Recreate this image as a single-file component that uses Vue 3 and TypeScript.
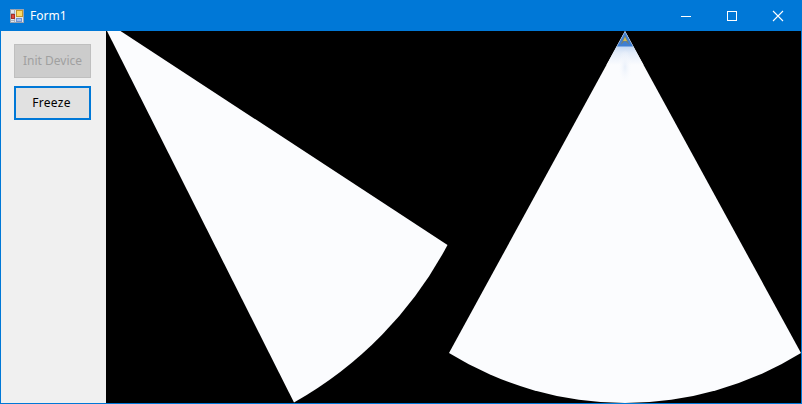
<script setup lang="ts">
const rightWedge = 'M625 0 L449 322 A335 335 0 0 0 801 322 Z'
const leftWedge = 'M107 0 L294 371.5 A390 390 0 0 0 447.5 214 L120.5 0 Z'
</script>

<template>
  <div class="window">
    <header class="titlebar">
      <svg class="app-icon" width="16" height="16" viewBox="0 0 16 16">
        <rect x="1.500" y="1.500" width="13" height="13" fill="#dfe5ee" stroke="#98a2b0" />
        <path d="M1.500 5.500H6M5.500 1.500V14.500M1.500 12.500H6" stroke="#a9b2bf" />
        <rect x="7.500" y="2.500" width="6" height="6" fill="#fbd968" stroke="#c1962a" />
        <rect x="2.500" y="6.500" width="3" height="4" fill="#e2473c" stroke="#a5302a" />
        <rect x="7.500" y="10.500" width="5" height="3" fill="#a4c0f0" stroke="#7393d0" />
      </svg>
      <span class="title">Form1</span>
      <div class="controls">
        <svg width="46" height="30" viewBox="0 0 46 30"><path d="M18 15.5H28" stroke="#fff" /></svg>
        <svg width="46" height="30" viewBox="0 0 46 30"><rect x="18.5" y="10.5" width="9" height="9" fill="none" stroke="#fff" /></svg>
        <svg width="46" height="30" viewBox="0 0 46 30"><path d="M18 10L28 20M28 10L18 20" stroke="#fff" stroke-width="1.1" /></svg>
      </div>
    </header>
    <div class="body">
      <aside class="sidebar">
        <button class="btn disabled" disabled>Init Device</button>
        <button class="btn focused">Freeze</button>
      </aside>
      <main class="canvas">
        <svg class="scene" viewBox="106 0 695 372" preserveAspectRatio="none">
          <defs>
            <linearGradient id="glow" gradientUnits="userSpaceOnUse" x1="0" y1="12" x2="0" y2="34">
              <stop offset="0" stop-color="#b6cfef" />
              <stop offset="0.45" stop-color="#e3ecf9" />
              <stop offset="1" stop-color="#fbfcfe" />
            </linearGradient>
            <radialGradient id="streak">
              <stop offset="0" stop-color="#e9f0fa" />
              <stop offset="1" stop-color="#fbfcfe" stop-opacity="0" />
            </radialGradient>
          </defs>
          <path :d="leftWedge" fill="#fbfcfe" />
          <path :d="rightWedge" fill="#fbfcfe" />
          <path d="M625 0 L606.5 34 H643.500 Z" fill="url(#glow)" />
          <ellipse cx="625" cy="36" rx="7" ry="17" fill="url(#streak)" />
          <path d="M625 1 L617 15.500 H633 Z" fill="#3f7fd2" />
          <path d="M625 4 L620.500 14 L625 10 L629.500 14 Z" fill="#6f7f78" />
          <path d="M625 6 L623 10 H627 Z" fill="#d4b94e" />
        </svg>
      </main>
    </div>
  </div>
</template>

<style scoped>
.window {
  width: 802px;
  height: 404px;
  box-sizing: border-box;
  border: 1px solid #0078d7;
  border-top: 0;
  display: flex;
  flex-direction: column;
  overflow: hidden;
}
.titlebar {
  height: 31px;
  flex: none;
  margin: 0 -1px;
  background: #0078d7;
  color: #fff;
  display: flex;
  align-items: center;
  padding-left: 9px;
  font: 12px "Noto Sans", sans-serif;
}
.app-icon {
  flex: none;
  margin-right: 5px;
}
.controls {
  margin-left: auto;
  display: flex;
  margin-right: 1px;
}
.controls svg {
  display: block;
}
.body {
  flex: 1;
  display: flex;
  min-height: 0;
}
.sidebar {
  width: 105px;
  flex: none;
  box-sizing: border-box;
  background: #f0f0f0;
  padding: 13px 0 0 13px;
  display: flex;
  flex-direction: column;
  gap: 8px;
}
.btn {
  width: 77px;
  height: 34px;
  padding: 0 0 2px;
  font: 12px "Noto Sans", sans-serif;
  box-sizing: border-box;
}
.disabled {
  background: #cccccc;
  border: 1px solid #bfbfbf;
  color: #a0a0a0;
}
.focused {
  background: #e1e1e1;
  border: 2px solid #0078d7;
  color: #000;
  padding-right: 2px;
  letter-spacing: 0.3px;
}
.canvas {
  flex: 1;
  background: #000;
  min-width: 0;
}
.scene {
  display: block;
  width: 100%;
  height: 100%;
}
</style>
